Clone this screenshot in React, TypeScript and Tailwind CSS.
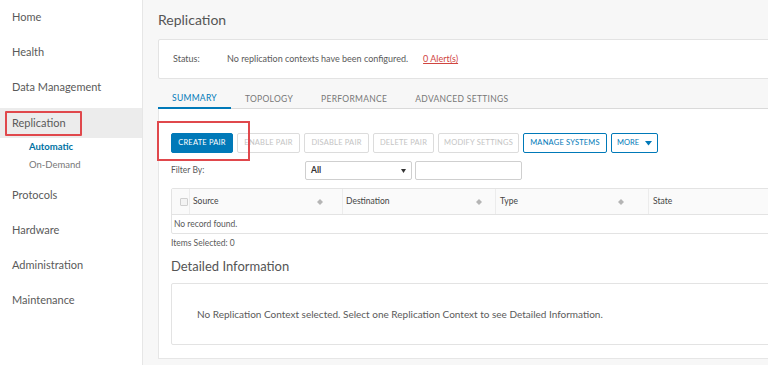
import React from "react";

const font = { fontFamily: "Lato, 'Open Sans', sans-serif" };

function SortIcon() {
  return (
    <svg width="6" height="6" viewBox="0 0 6 6" className="shrink-0">
      <path d="M3 0 L6 3 L3 6 L0 3 Z" fill="#b5b5b5" />
    </svg>
  );
}

function Btn({ label, w, kind }: { label: string; w: string; kind: "primary" | "disabled" | "outline" }) {
  const cls =
    kind === "primary"
      ? "bg-[#0079b8] text-white border-[#0079b8]"
      : kind === "outline"
      ? "bg-white text-[#0079b8] border-[#0079b8]"
      : "bg-white text-[#c4c4c4] border-[#dcdcdc]";
  return (
    <div className={`h-[20px] ${w} border rounded-[2px] flex items-center justify-center text-[7.5px] tracking-[0.2px] ${cls}`}>
      {label}
    </div>
  );
}

export default function App() {
  const nav = ["Home", "Health", "Data Management"];
  const nav2 = ["Protocols", "Hardware", "Administration", "Maintenance"];
  return (
    <div className="w-[768px] h-[365px] flex overflow-hidden bg-[#f7f7f7] text-[#5a5a5a]" style={font}>
      {/* Sidebar */}
      <div className="w-[143px] shrink-0 bg-white border-r border-[#e6e6e6] flex flex-col">
        {nav.map((n) => (
          <div key={n} className="h-[35px] flex items-center pl-[12px] text-[11px]">{n}</div>
        ))}
        <div className="mt-[3px] h-[30px] bg-[#ececec] flex items-center pl-[12px] text-[11px] relative">
          Replication
          <div className="absolute left-[5px] top-[3px] w-[77px] h-[25px] border-2 border-[#e0484c] rounded-[1px]" />
        </div>
        <div className="h-[18px] flex items-center pl-[29px] text-[9.5px] font-bold text-[#0072a3]">Automatic</div>
        <div className="h-[18px] flex items-center pl-[29px] text-[9.5px] text-[#777]">On-Demand</div>
        <div className="h-[4px]" />
        {nav2.map((n) => (
          <div key={n} className="h-[35px] flex items-center pl-[12px] text-[11px]">{n}</div>
        ))}
      </div>

      {/* Main */}
      <div className="flex-1 pl-[15px] flex flex-col min-w-0">
        <div className="w-[700px] flex flex-col">
          <div className="h-[39px] flex items-center text-[14px] text-[#555]">Replication</div>
          <div className="h-[40px] bg-white border border-[#e3e3e3] rounded-[2px] flex items-center text-[9px]">
            <span className="ml-[14px] w-[54px]">Status:</span>
            <span>No replication contexts have been configured.</span>
            <span className="ml-[15px] text-[#d0453f] underline">0 Alert(s)</span>
          </div>
          <div className="mt-[10px] h-[20px] flex border-b border-[#dadada] text-[8.5px] tracking-[0.3px]">
            <div className="px-[14px] flex items-center text-[#0079b8] border-b-2 border-[#0079b8] -mb-[1px] pt-[1px]">SUMMARY</div>
            <div className="px-[14px] flex items-center text-[#777] pt-[1px]">TOPOLOGY</div>
            <div className="px-[14px] flex items-center text-[#777] pt-[1px]">PERFORMANCE</div>
            <div className="px-[14px] flex items-center text-[#777] pt-[1px]">ADVANCED SETTINGS</div>
          </div>
          <div className="h-[250px] bg-white border-l border-b border-[#e6e6e6] pl-[12px] flex flex-col">
            <div className="mt-[24px] flex gap-[4px] relative">
              <div className="absolute -left-[14px] -top-[12px] w-[93px] h-[40px] border-2 border-[#e0484c]" />
              <Btn label="CREATE PAIR" w="w-[62px]" kind="primary" />
              <Btn label="ENABLE PAIR" w="w-[63px]" kind="disabled" />
              <Btn label="DISABLE PAIR" w="w-[65px]" kind="disabled" />
              <Btn label="DELETE PAIR" w="w-[61px]" kind="disabled" />
              <Btn label="MODIFY SETTINGS" w="w-[81px]" kind="disabled" />
              <Btn label="MANAGE SYSTEMS" w="w-[84px]" kind="outline" />
              <div className="h-[20px] w-[47px] border border-[#0079b8] rounded-[2px] flex items-center justify-center gap-[6px] text-[7.5px] text-[#0079b8]">
                MORE
                <svg width="7" height="5" viewBox="0 0 7 5"><path d="M0 0 L7 0 L3.5 4.5 Z" fill="#0079b8" /></svg>
              </div>
            </div>
            <div className="mt-[8px] flex items-start">
              <span className="w-[134px] text-[8.5px] mt-[3px]">Filter By:</span>
              <div className="h-[19px] w-[107px] border border-[#cfcfcf] rounded-[2px] flex items-center justify-between px-[5px] text-[8.5px] font-bold text-[#333]">
                All
                <svg width="5" height="4" viewBox="0 0 5 4"><path d="M0 0 L5 0 L2.5 4 Z" fill="#333" /></svg>
              </div>
              <div className="ml-[3px] h-[19px] w-[107px] border border-[#cfcfcf] rounded-[2px]" />
            </div>
            <div className="mt-[8px] border border-[#e3e3e3] rounded-[2px]">
              <div className="h-[26px] bg-[#fafafa] border-b border-[#e3e3e3] flex items-center text-[8.5px] text-[#444]">
                <div className="w-[18px] h-full flex items-center justify-center border-r border-[#ececec]">
                  <div className="w-[8px] h-[8px] border border-[#cfcfcf] bg-[#f3f3f3] rounded-[1px] ml-[6px]" />
                </div>
                <div className="w-[153px] h-full flex items-center justify-between pl-[3px] pr-[19px] border-r border-[#ececec]">
                  Source <SortIcon />
                </div>
                <div className="w-[153px] h-full flex items-center justify-between pl-[3px] pr-[13px] border-r border-[#ececec]">
                  Destination <SortIcon />
                </div>
                <div className="w-[153px] h-full flex items-center justify-between pl-[4px] pr-[24px] border-r border-[#ececec]">
                  Type <SortIcon />
                </div>
                <div className="flex-1 h-full flex items-center pl-[4px]">State</div>
              </div>
              <div className="h-[18px] flex items-center pl-[2px] text-[8.5px]">No record found.</div>
            </div>
            <div className="mt-[3px] text-[8.5px]">Items Selected: 0</div>
            <div className="mt-[7px] text-[13px] text-[#555]">Detailed Information</div>
            <div className="mt-[7px] h-[62px] bg-white border border-[#e3e3e3] rounded-[2px] flex items-center pl-[25px] text-[10px]">
              No Replication Context selected. Select one Replication Context to see Detailed Information.
            </div>
          </div>
        </div>
      </div>
    </div>
  );
}
